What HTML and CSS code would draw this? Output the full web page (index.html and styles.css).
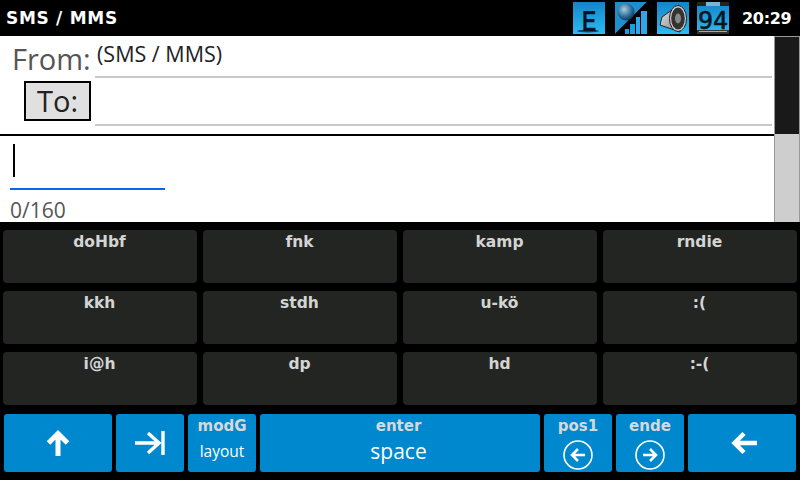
FILE: index.html
```html
<!DOCTYPE html>
<html lang="de">
<head>
<meta charset="utf-8">
<title>SMS / MMS</title>
<link rel="stylesheet" href="styles.css">
</head>
<body>
<div class="screen">
  <header class="status">
    <div class="title">SMS / MMS</div>
    <div class="tray">
      <svg class="ico" viewBox="0 0 32 32">
        <defs>
          <linearGradient id="b" x1="0" y1="0" x2="0" y2="1"><stop offset="0" stop-color="#1484c8"/><stop offset="1" stop-color="#2cbcf4"/></linearGradient>
          <radialGradient id="g" cx=".4" cy=".35" r=".7"><stop offset="0" stop-color="#a9cde0"/><stop offset=".6" stop-color="#2d6f9c"/><stop offset="1" stop-color="#0c3050"/></radialGradient>
          <linearGradient id="s" x1="0" y1="0" x2="1" y2="1"><stop offset="0" stop-color="#f0f0f0"/><stop offset="1" stop-color="#777"/></linearGradient>
        </defs>
        <rect width="32" height="32" fill="url(#b)"/>
        <ellipse cx="15" cy="29" rx="11" ry="1.4" fill="#0b4a70"/>
        <text class="ico-e" x="0" y="0" transform="translate(9 29) scale(.72 1)">E</text>
      </svg>
      <svg class="ico" viewBox="0 0 32 32">
        <path d="M0 0H32L0 32Z" fill="#1d8fcf"/>
        <path d="M32 0V32H0Z" fill="#000"/>
        <circle cx="11" cy="10" r="8.5" fill="url(#g)"/>
        <rect x="10" y="27" width="4" height="5" fill="#1f9be0"/>
        <rect x="15" y="22" width="5" height="10" fill="#1f9be0"/>
        <rect x="21" y="15" width="4" height="17" fill="#2aa8ea"/>
        <rect x="26" y="9" width="6" height="23" fill="#2aa8ea"/>
      </svg>
      <svg class="ico" viewBox="0 0 32 32">
        <rect width="32" height="32" fill="url(#b)"/>
        <path d="M22 3L5 15L3 23L23 30Z" fill="url(#s)" stroke="#222" stroke-width="1"/>
        <ellipse cx="21" cy="16.500" rx="8.500" ry="13" fill="#ccc" stroke="#222" stroke-width="1"/>
        <ellipse cx="21" cy="16.500" rx="6.800" ry="11" fill="#333"/>
        <ellipse cx="21" cy="16.500" rx="3" ry="5" fill="#888"/>
      </svg>
      <svg class="ico" viewBox="0 0 32 32">
        <rect width="32" height="32" fill="url(#b)"/>
        <rect y="0" width="32" height="4" fill="#222"/>
        <rect x="9" y="0" width="14" height="4" fill="#7fb4d0"/>
        <rect y="28" width="32" height="4" fill="#333"/>
        <rect x="2" y="29" width="28" height="1" fill="#9ab"/>
        <text class="ico-num" x="16" y="27" text-anchor="middle">94</text>
      </svg>
    </div>
    <div class="clock">20:29</div>
  </header>

  <main class="compose">
    <div class="fields">
      <div class="head">
        <div class="row row-from">
          <div class="from-label">From:</div>
          <div class="field">(SMS / MMS)</div>
        </div>
        <div class="row row-to">
          <div class="to-cell"><div class="to-btn">To:</div></div>
          <div class="field"></div>
        </div>
      </div>
      <div class="body">
        <div class="input"><span class="caret"></span></div>
        <div class="count">0/160</div>
      </div>
    </div>
    <div class="scroll"><div class="thumb"></div></div>
  </main>

  <section class="keys">
    <div class="key">doHbf</div><div class="key">fnk</div><div class="key">kamp</div><div class="key">rndie</div>
    <div class="key">kkh</div><div class="key">stdh</div><div class="key">u-kö</div><div class="key">:(</div>
    <div class="key">i@h</div><div class="key">dp</div><div class="key">hd</div><div class="key">:-(</div>
  </section>

  <section class="bar">
    <div class="btn w108"><svg class="arrow up" viewBox="0 0 24 28"><path d="M12 27V4M2.500 14L12 4.500L21.500 14" /></svg></div>
    <div class="btn w68"><svg class="arrow tab" viewBox="0 0 30 24"><path d="M0 12H25M13 2L24 12L13 22M28 0V24"/></svg></div>
    <div class="btn w68 duo"><span class="top">modG</span><span class="sub small">layout</span></div>
    <div class="btn grow duo shift"><span class="top">enter</span><span class="sub">space</span></div>
    <div class="btn w68 duo"><span class="top">pos1</span><svg class="circ" viewBox="0 0 30 30"><circle cx="15" cy="15" r="14"/><path class="in" d="M22 15H9M15 9L9 15L15 21"/></svg></div>
    <div class="btn w68 duo"><span class="top">ende</span><svg class="circ" viewBox="0 0 30 30"><circle cx="15" cy="15" r="14"/><path class="in" d="M8 15H21M15 9L21 15L15 21"/></svg></div>
    <div class="btn w108 back"><svg class="arrow left" viewBox="0 0 26 24"><path d="M26 12H4M13 2.500L3.500 12L13 21.500"/></svg></div>
  </section>
</div>
</body>
</html>
```

FILE: styles.css
```css
* { box-sizing: border-box; }
html, body { margin: 0; padding: 0; }
body { background: #000; font-family: "DejaVu Sans", sans-serif; }
.screen { width: 800px; height: 480px; display: flex; flex-direction: column; background: #000; overflow: hidden; }

.status { height: 36px; flex: none; display: flex; align-items: center; background: #000; color: #fff; padding: 0 5px 0 6px; }
.title { flex: 1; font-size: 17px; font-weight: 700; letter-spacing: 0.7px; }
.tray { display: flex; gap: 10px; margin-right: 13px; }
.tray .ico:nth-child(3) { margin-right: -2px; }
.ico { width: 32px; height: 32px; display: block; overflow: visible; }
.ico-e { font: 700 30px "Liberation Sans", sans-serif; fill: #06161f; }
.ico-num { font: 400 25px "DejaVu Sans Mono", monospace; fill: #06161f; stroke: #06161f; stroke-width: .6; }
.clock { font-size: 16px; font-weight: 700; width: 53px; letter-spacing: -0.3px; }

.compose { height: 186px; flex: none; display: flex; background: #fff; }
.fields { width: 774px; display: flex; flex-direction: column; }
.head { height: 100px; border-bottom: 2px solid #000; padding-right: 2px; flex: none; }
.row { display: flex; height: 48px; }
.row-from { height: 42px; }
.from-label { width: 95px; padding: 5px 0 0 12px; font: 29px/36px "Open Sans", sans-serif; color: #555; }
.field { flex: 1; border-bottom: 2px solid #c8c8c8; font: 21.500px/26px "Open Sans", sans-serif; color: #222; padding: 5px 0 0 2px; }
.to-cell { width: 95px; padding: 3px 0 0 24px; }
.to-btn { width: 67px; height: 40px; background: #e0e0e0; border: 2px solid #000; font: 29px/35px "Open Sans", sans-serif; color: #222; text-align: center; }
.body { flex: 1; padding: 0 0 0 10px; display: flex; flex-direction: column; }
.input { width: 155px; height: 54px; border-bottom: 2px solid #0a66e8; padding: 8px 0 0 3px; }
.caret { display: block; width: 2px; height: 33px; background: #000; }
.count { font: 21px/26px "Open Sans", sans-serif; color: #555; padding-top: 7px; }

.scroll { width: 26px; background: #cecece; border-top: 1px solid #999; border-left: 1px solid #999; border-right: 1px solid #999; }
.thumb { height: 97px; background: #191919; }

.keys { flex: none; height: 192px; display: grid; grid-template-columns: repeat(4, 194px); grid-auto-rows: 53px; column-gap: 6px; row-gap: 8px; padding: 8px 3px 0; }
.key { background: #232522; border-radius: 4px; color: #d4d4d4; font-size: 15.500px; font-weight: 700; text-align: center; padding: 2px 1px 0 0; line-height: 20px; }

.bar { flex: none; height: 58px; display: flex; gap: 4px; padding: 0 4px; }
.btn { background: #0088cf; border-radius: 3px; display: flex; align-items: center; justify-content: center; }
.w108 { width: 108px; }
.w68 { width: 68px; }
.grow { flex: 1; }
.duo { flex-direction: column; justify-content: flex-start; padding-top: 2px; }
.shift { padding-right: 3px; }
.back { padding-left: 3px; }
.top { color: #d8d8d8; font-size: 15px; font-weight: 700; line-height: 20px; }
.sub { color: #fff; font: 21px/30px "Open Sans", sans-serif; }
.small { font-size: 15.500px; }
.arrow { fill: none; stroke: #fff; stroke-width: 5; }
.up { width: 24px; height: 28px; }
.left { width: 26px; height: 24px; stroke-width: 4.500; }
.tab { width: 30px; height: 24px; stroke-width: 3.400; }
.circ { width: 30px; height: 30px; fill: none; stroke: #fff; stroke-width: 1.600; margin-top: 4px; }
.in { stroke-width: 2.600; }
```
